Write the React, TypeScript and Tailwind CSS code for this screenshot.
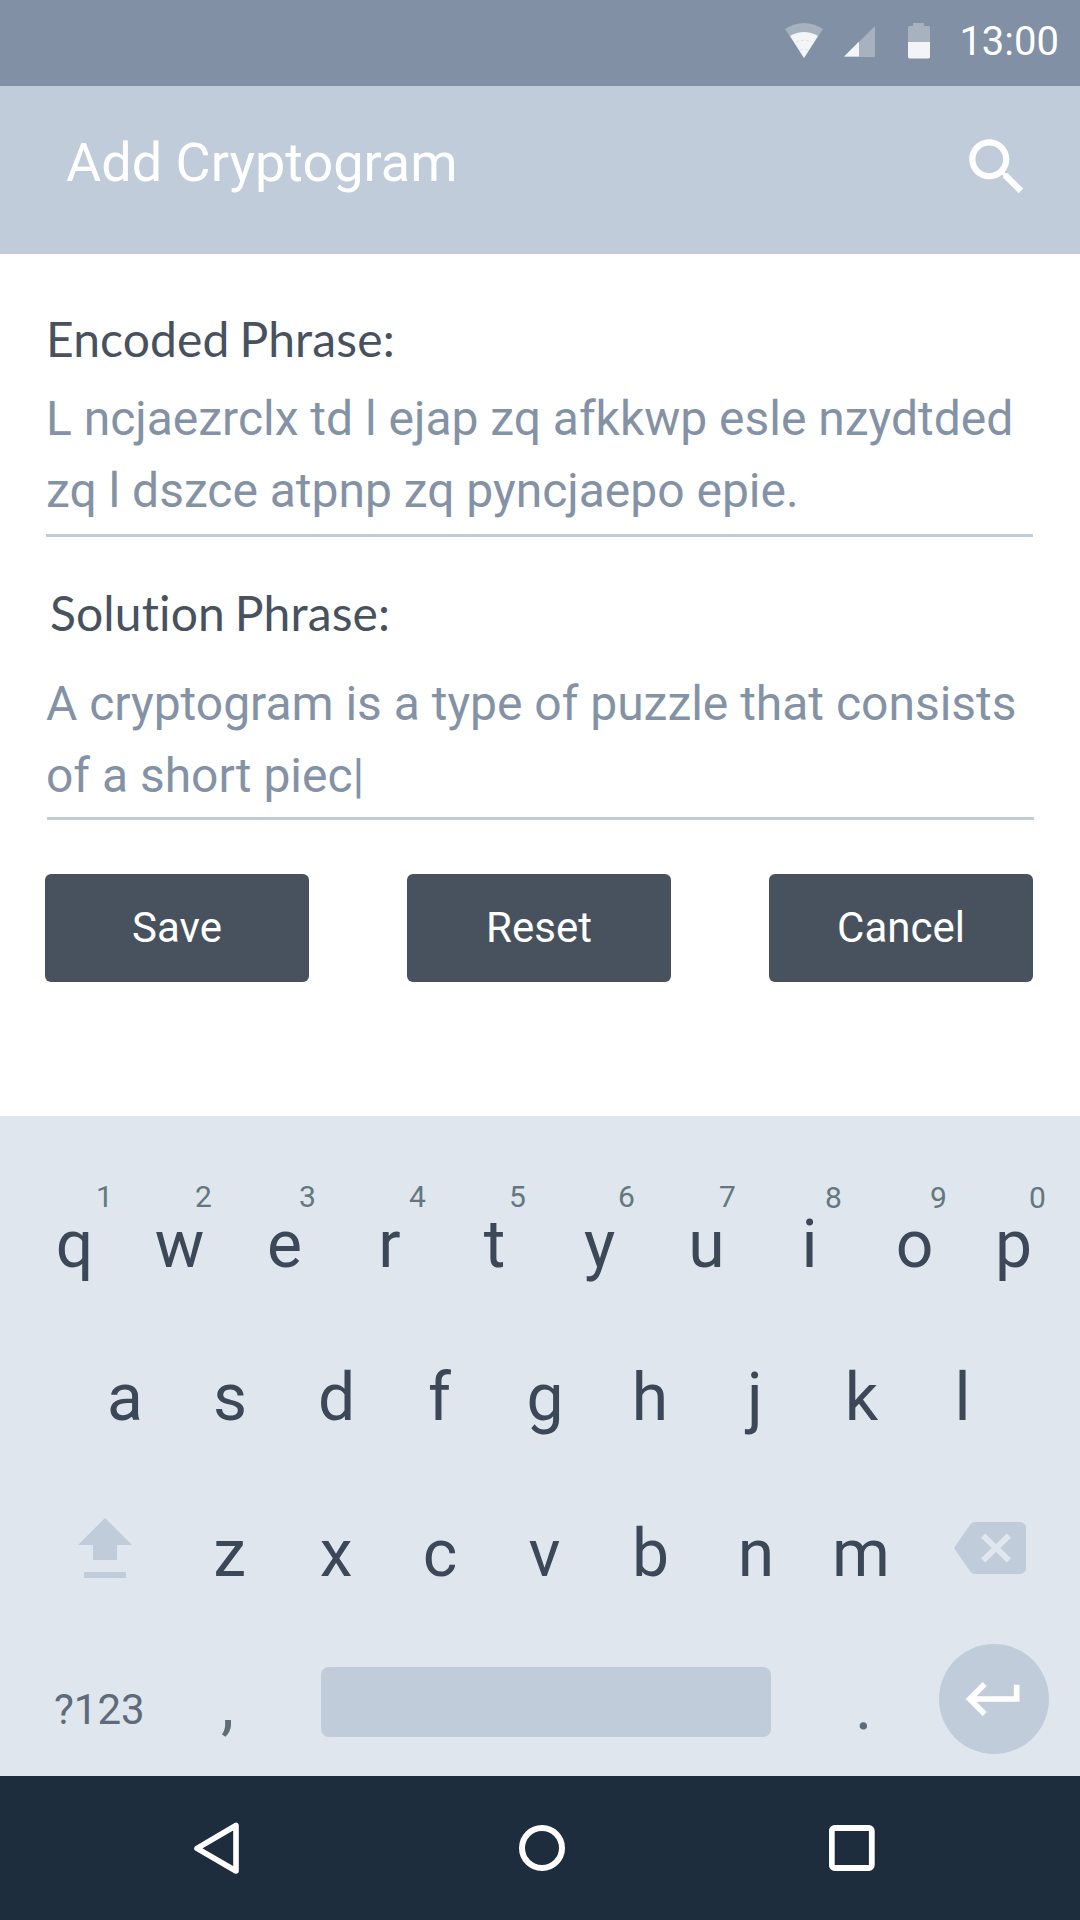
import React from "react";

type Key = { label: string; hint?: string; hintClass?: string; keyClass?: string };

const topRow: Key[] = [
  { label: "q", hint: "1", hintClass: "pl-[60px]" },
  { label: "w", hint: "2", hintClass: "pl-[48px]" },
  { label: "e", hint: "3", hintClass: "pl-[46px]" },
  { label: "r", hint: "4", hintClass: "pl-[56px]" },
  { label: "t", hint: "5", hintClass: "pl-[46px]" },
  { label: "y", hint: "6", hintClass: "pl-[54px]" },
  { label: "u", hint: "7", hintClass: "pl-[46px]", keyClass: "pl-[4px]" },
  { label: "i", hint: "8", hintClass: "pl-[48px] pt-px" },
  { label: "o", hint: "9", hintClass: "pl-[48px] pt-px" },
  { label: "p", hint: "0", hintClass: "pl-[49px] pt-px", keyClass: "pl-[1px]" },
];

const middleRow: Key[] = [
  { label: "a", keyClass: "pl-[1px]" },
  { label: "s", keyClass: "pl-[1px]" },
  { label: "d", keyClass: "pl-[4px]" },
  { label: "f" },
  { label: "g", keyClass: "pl-[1px]" },
  { label: "h", keyClass: "pl-[1px]" },
  { label: "j", keyClass: "pl-[1px]" },
  { label: "k", keyClass: "pl-[4px]" },
  { label: "l", keyClass: "pr-[4px]" },
];

const bottomRow: Key[] = [
  { label: "z" },
  { label: "x", keyClass: "pl-[3px]" },
  { label: "c", keyClass: "pl-[1px]" },
  { label: "v" },
  { label: "b", keyClass: "pl-[2px]" },
  { label: "n", keyClass: "pl-[3px]" },
  { label: "m", keyClass: "pl-[3px]" },
];

function StatusBar() {
  return (
    <div className="flex h-[86px] items-start justify-end bg-[#8190a5] pr-[21px]">
      <svg className="mt-[23px] mr-[21px]" width="38" height="35" viewBox="0 0 38 35">
        <path d="M0 6Q19 -6 38 6L19 35Z" fill="#fff" fillOpacity=".3" />
        <path d="M5 13Q19 5 33 13L19 35Z" fill="#fff" fillOpacity=".87" />
        <path d="M11 19Q19 16 27 19M15 27Q19 25.500 23 27" fill="none" stroke="#8190a5" strokeOpacity=".2" strokeWidth="1" strokeDasharray="3 2" />
      </svg>
      <svg className="mt-[26px] mr-[33px]" width="31" height="31" viewBox="0 0 31 31">
        <path d="M0 31L31 0V31Z" fill="#fff" fillOpacity=".3" />
        <path d="M0 30.5L15 15.5V30.5Z" fill="#fff" fillOpacity=".87" />
      </svg>
      <svg className="mt-[23px] mr-[29px]" width="22" height="36" viewBox="0 0 22 36">
        <path d="M5 0H16V3H20.5Q22 3 22 4.500V19H0V4.500Q0 3 1.500 3H5Z" fill="#fff" fillOpacity=".3" />
        <path d="M0 19H22V33.500Q22 35.500 20.500 35.500H1.500Q0 35.500 0 33.500Z" fill="#fff" fillOpacity=".9" />
      </svg>
      <span className="mt-[18px] text-[40px] leading-[48px] text-white">13:00</span>
    </div>
  );
}

function AppBar() {
  return (
    <header className="flex h-[168px] items-start justify-between bg-[#c0ccda] pr-[46px] pl-[66px]">
      <h1 className="mt-[45px] text-[54px] leading-[64px] text-white">Add Cryptogram</h1>
      <svg className="mt-[44px]" width="74" height="74" viewBox="0 0 24 24" fill="#fff">
        <path d="M15.5 14h-.79l-.28-.27C15.41 12.59 16 11.11 16 9.5 16 5.91 13.09 3 9.5 3S3 5.91 3 9.5 5.91 16 9.5 16c1.61 0 3.09-.59 4.23-1.57l.27.28v.79l5 4.99L20.49 19l-4.99-5zm-6 0C7.01 14 5 11.99 5 9.5S7.01 5 9.5 5 14 7.01 14 9.5 11.99 14 9.5 14z" />
      </svg>
    </header>
  );
}

function FieldLabel({ children }: { children: string }) {
  return (
    <h2 className="font-['Lato',sans-serif] text-[48px] leading-[58px] tracking-[0.12px] [word-spacing:-2.5px] text-[#47525e] [font-variant-ligatures:none]">
      {children}
    </h2>
  );
}

function ActionButton({ children }: { children: string }) {
  return (
    <button className="flex h-[108px] w-[264px] items-center justify-center rounded-[6px] bg-[#47525e] text-[42px] leading-[50px] text-white">
      {children}
    </button>
  );
}

function Form() {
  return (
    <main className="h-[862px] bg-white pt-[56px] pr-[46px] pl-[46px]">
      <FieldLabel>Encoded Phrase:</FieldLabel>
      <p className="mt-[15px] h-[154px] w-[987px] border-b-[3px] border-[#c0ccda] text-[48px] leading-[72px] tracking-[-0.02px] whitespace-nowrap text-[#8492a6]">
        L ncjaezrclx td l ejap zq afkkwp esle nzydtded
        <br />
        zq l dszce atpnp zq pyncjaepo epie.
      </p>
      <div className="mt-[47px] ml-[4px]">
        <FieldLabel>Solution Phrase:</FieldLabel>
      </div>
      <p className="mt-[26px] ml-px h-[152px] w-[987px] border-b-[3px] border-[#c0ccda] text-[48px] leading-[72px] tracking-[-0.02px] whitespace-nowrap text-[#8492a6]">
        <span className="-ml-px">A cryptogram is a type of puzzle that consists</span>
        <br />
        <span className="-ml-px">of a short piec|</span>
      </p>
      <div className="mt-[54px] -ml-px flex w-[988px] justify-between">
        <ActionButton>Save</ActionButton>
        <ActionButton>Reset</ActionButton>
        <ActionButton>Cancel</ActionButton>
      </div>
    </main>
  );
}

function Keyboard() {
  return (
    <section className="h-[660px] bg-[#dfe6ee] text-[66px] leading-[78px] text-[#3c4858]">
      <div className="grid h-[243px] grid-cols-[repeat(9,105px)_92px] pt-[63px] pl-[22px]">
        {topRow.map((k) => (
          <div key={k.label} className="flex flex-col text-center">
            <div className={`h-[27px] text-[30px] leading-[36px] text-[#64777f] ${k.hintClass}`}>{k.hint}</div>
            <div className={k.keyClass}>{k.label}</div>
          </div>
        ))}
      </div>
      <div className="grid h-[156px] grid-cols-[repeat(9,105px)] pl-[72px] text-center">
        {middleRow.map((k) => (
          <div key={k.label} className={k.keyClass}>
            {k.label}
          </div>
        ))}
      </div>
      <div className="flex h-[129px] items-start pl-[78px]">
        <svg className="mt-[3px] mr-[45px]" width="54" height="60" viewBox="0 0 54 60" fill="#c0ccda">
          <path d="M27 0L54 27H39V42H15V27H0ZM6 54H48V60H6Z" />
        </svg>
        <div className="grid grid-cols-[repeat(7,105px)] text-center">
          {bottomRow.map((k) => (
            <div key={k.label} className={k.keyClass}>
              {k.label}
            </div>
          ))}
        </div>
        <svg
          className="mt-[7px] ml-[42px]"
          width="72"
          height="52"
          viewBox="0 3 24 18"
          preserveAspectRatio="none"
          fill="#c0ccda"
        >
          <path d="M22 3H7c-.69 0-1.230.35-1.590.88L0 12l5.410 8.110c.36.53.9.89 1.590.89h15c1.100 0 2-.9 2-2V5c0-1.100-.9-2-2-2zm-3 12.590L17.590 17 14 13.410 10.410 17 9 15.590 12.590 12 9 8.410 10.410 7 14 10.590 17.590 7 19 8.410 15.410 12 19 15.590z" />
        </svg>
      </div>
      <div className="flex h-[110px] items-start pl-[54px] text-[#5e6b7a]">
        <span className="mt-[41px] w-[159px] text-[42px] leading-[50px]">?123</span>
        <span className="mt-[22px] w-[108px] pl-[8px]">,</span>
        <div className="mt-[23px] h-[70px] w-[450px] rounded-[8px] bg-[#c0ccda]" />
        <span className="mt-[24px] w-[168px] pl-[84px]">.</span>
        <div className="flex size-[110px] items-center justify-center rounded-full bg-[#c0ccda]">
          <svg className="-mt-px" width="68" height="68" viewBox="0 0 24 24" fill="#fff">
            <path d="M19 7v4H5.830l3.580-3.590L8 6l-6 6 6 6 1.410-1.410L5.830 13H21V7z" />
          </svg>
        </div>
      </div>
    </section>
  );
}

function NavBar() {
  return (
    <nav className="flex h-[144px] items-center bg-[#1e2d3d] pl-[193px]">
      <svg className="mr-[278px]" width="48" height="54" viewBox="0 0 48 54" fill="none" stroke="#fff">
        <path d="M4 27.300L43 4.500V50Z" strokeWidth="5.600" strokeLinejoin="round" />
      </svg>
      <svg className="mr-[264px]" width="46" height="46" viewBox="0 0 46 46" fill="none" stroke="#fff">
        <circle cx="23" cy="23" r="20" strokeWidth="6" />
      </svg>
      <svg width="46" height="46" viewBox="0 0 46 46" fill="none" stroke="#fff">
        <rect x="2.800" y="3" width="40" height="40" rx="3" strokeWidth="5.800" />
      </svg>
    </nav>
  );
}

export default function App() {
  return (
    <div className="h-[1920px] w-[1080px] overflow-hidden font-['Roboto',sans-serif]">
      <StatusBar />
      <AppBar />
      <Form />
      <Keyboard />
      <NavBar />
    </div>
  );
}
